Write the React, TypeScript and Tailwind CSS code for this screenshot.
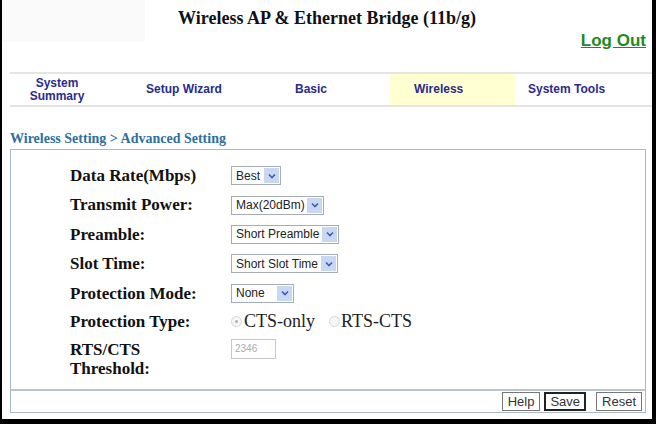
import React from "react";

const serif = "font-['Liberation_Serif','Times_New_Roman',serif]";
const sans = "font-['Liberation_Sans',Arial,sans-serif]";

function Chevron() {
  return (
    <span className="ml-auto mr-[1px] flex h-[15px] w-[15px] items-center justify-center bg-[#c9d8f2]">
      <svg width="8" height="6" viewBox="0 0 8 6">
        <path d="M1 1.5 L4 4.5 L7 1.5" fill="none" stroke="#3a5fb0" strokeWidth="1.6" />
      </svg>
    </span>
  );
}

function FakeSelect({ value, width }: { value: string; width: string }) {
  return (
    <div
      className={`flex h-[19px] items-center border border-[#a5acb5] bg-white pl-[4px] text-[12px] text-[#222] ${sans} ${width}`}
    >
      <span>{value}</span>
      <Chevron />
    </div>
  );
}

function Radio({ checked }: { checked?: boolean }) {
  return (
    <span className="flex h-[11px] w-[11px] items-center justify-center rounded-full border border-[#d6d6d6] bg-[#f6f6f6]">
      {checked && <span className="h-[3px] w-[3px] rounded-full bg-[#b0b0b0]" />}
    </span>
  );
}

const rows = [
  { label: "Data Rate(Mbps)", control: <FakeSelect value="Best" width="w-[50px]" /> },
  { label: "Transmit Power:", control: <FakeSelect value="Max(20dBm)" width="w-[93px]" /> },
  { label: "Preamble:", control: <FakeSelect value="Short Preamble" width="w-[108px]" /> },
  { label: "Slot Time:", control: <FakeSelect value="Short Slot Time" width="w-[107px]" /> },
  { label: "Protection Mode:", control: <FakeSelect value="None" width="w-[63px]" /> },
];

const tabs = [
  { name: "System Summary", cls: "w-[94px] justify-center", active: false },
  { name: "Setup Wizard", cls: "w-[150px] pl-[42px]", active: false },
  { name: "Basic", cls: "w-[136px] pl-[41px]", active: false },
  { name: "Wireless", cls: "w-[125px] pl-[24px]", active: true },
  { name: "System Tools", cls: "w-[135px] pl-[13px]", active: false },
];

export default function App() {
  return (
    <div className="h-[424px] w-[656px] overflow-hidden bg-black">
      <div className="ml-[2px] h-[419px] w-[650px] bg-white">
        {/* header */}
        <div className="relative h-[72px]">
          <div className="absolute left-0 top-0 h-[42px] w-[143px] bg-[#fafafa]" />
          <h1 className={`pt-[5px] text-center text-[18px] font-bold text-[#111] ${serif}`}>
            Wireless AP &amp; Ethernet Bridge (11b/g)
          </h1>
          <a
            href="#"
            className={`absolute right-[6px] top-[28px] text-[17px] font-bold text-[#1f8a1f] underline ${sans}`}
          >
            Log Out
          </a>
        </div>

        {/* nav */}
        <div className="ml-[8px] flex h-[35px] border-y-2 border-[#e4e4e4]">
          {tabs.map((t) => (
            <div
              key={t.name}
              className={`flex items-center text-center text-[12px] leading-[13px] font-bold text-[#2b2b8c] ${sans} ${t.cls} ${
                t.active ? "bg-[#ffffd2]" : ""
              }`}
            >
              {t.name === "System Summary" ? (
                <span>
                  System
                  <br />
                  Summary
                </span>
              ) : (
                <span>{t.name}</span>
              )}
            </div>
          ))}
        </div>

        {/* breadcrumb */}
        <div className={`ml-[8px] mt-[24px] text-[14px] leading-[16px] font-bold text-[#2f6f9f] ${serif}`}>
          Wireless Setting &gt; Advanced Setting
        </div>

        {/* panel */}
        <div className="ml-[8px] mt-[2px] w-[636px] border border-[#a9b9c8]">
          <div className="flex flex-col pl-[59px] pt-[11px]">
            {rows.map((r) => (
              <div key={r.label} className="flex h-[29.4px] items-center">
                <span className={`w-[161px] text-[17px] font-bold text-[#111] ${serif}`}>{r.label}</span>
                {r.control}
              </div>
            ))}
            <div className="flex h-[27px] items-center">
              <span className={`w-[161px] text-[17px] font-bold text-[#111] ${serif}`}>Protection Type:</span>
              <div className={`flex items-center text-[18px] text-[#222] ${serif}`}>
                <Radio checked />
                <span className="ml-[2px]">CTS-only</span>
                <span className="ml-[14px]">
                  <Radio />
                </span>
                <span className="ml-[1px]">RTS-CTS</span>
              </div>
            </div>
            <div className="flex h-[54px] items-start pt-[5px]">
              <span className={`w-[161px] text-[17px] font-bold leading-[19px] text-[#111] ${serif}`}>
                RTS/CTS
                <br />
                Threshold:
              </span>
              <div
                className={`mt-[-1px] flex h-[20px] w-[45px] items-center border border-[#c8c8c8] pl-[3px] text-[10px] text-[#aaa] ${sans}`}
              >
                2346
              </div>
            </div>
          </div>
          <div className="flex h-[23px] items-center justify-end gap-[4px] border-t-2 border-[#b9c6d2] pr-[3px]">
            <button className={`h-[19px] border border-[#777] px-[5px] text-[13px] leading-[15px] text-[#333] ${sans}`}>Help</button>
            <button className={`h-[19px] border-2 border-[#222] px-[4px] text-[13px] leading-[15px] text-[#333] ${sans}`}>Save</button>
            <button className={`ml-[6px] h-[19px] border border-[#777] px-[5px] text-[13px] leading-[15px] text-[#333] ${sans}`}>
              Reset
            </button>
          </div>
        </div>
      </div>
    </div>
  );
}
